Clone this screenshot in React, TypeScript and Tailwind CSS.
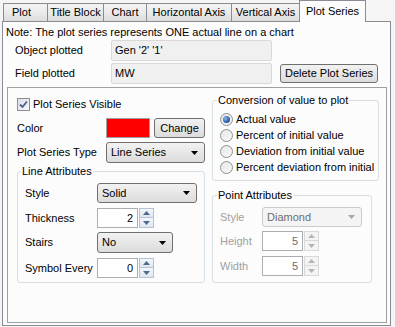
import React from "react";

const tabs = [
  { label: "Plot", w: "w-[45px] justify-start pl-[8px]" },
  { label: "Title Block", w: "w-[57px] justify-center" },
  { label: "Chart", w: "w-[44px] justify-center" },
  { label: "Horizontal Axis", w: "w-[86px] justify-center" },
  { label: "Vertical Axis", w: "w-[69px] justify-center" },
];

const Arrow = ({ up, color }: { up?: boolean; color: string }) => (
  <svg width="7" height="4" viewBox="0 0 7 4">
    {up ? <path d="M0 4 L3.5 0 L7 4 Z" fill={color} /> : <path d="M0 0 L7 0 L3.5 4 Z" fill={color} />}
  </svg>
);

const Combo = ({ text, className, disabled }: { text: string; className: string; disabled?: boolean }) => (
  <div
    className={`${className} flex items-center justify-between rounded-[3px] border pl-[4px] pr-[6px] ${
      disabled
        ? "border-[#c9cbcd] bg-[#f4f4f4] text-[#6d6d6d]"
        : "border-[#707070] bg-gradient-to-b from-[#f2f2f2] to-[#dcdcdc] text-black"
    }`}
  >
    <span>{text}</span>
    <Arrow color={disabled ? "#a8a8a8" : "#000"} />
  </div>
);

const Spin = ({ value, disabled }: { value: string; disabled?: boolean }) => (
  <div className="flex h-[20px]">
    <div
      className={`flex h-full w-[41px] items-center justify-end border bg-white pr-[4px] ${
        disabled ? "border-[#abadb3] text-[#6d6d6d]" : "border-[#abadb3] text-black"
      }`}
    >
      {value}
    </div>
    <div className="ml-px flex w-[15px] flex-col">
      <div
        className={`flex h-[10px] items-center justify-center border ${
          disabled ? "border-[#d9d9d9] bg-[#f4f4f4]" : "border-[#b4c3d6] bg-gradient-to-b from-[#f4f7fb] to-[#dfe6ef]"
        }`}
      >
        <Arrow up color={disabled ? "#b5b5b5" : "#4f6a8f"} />
      </div>
      <div
        className={`flex h-[10px] items-center justify-center border border-t-0 ${
          disabled ? "border-[#d9d9d9] bg-[#f4f4f4]" : "border-[#b4c3d6] bg-gradient-to-b from-[#f4f7fb] to-[#dfe6ef]"
        }`}
      >
        <Arrow color={disabled ? "#b5b5b5" : "#4f6a8f"} />
      </div>
    </div>
  </div>
);

const Radio = ({ label, checked }: { label: string; checked?: boolean }) => (
  <div className="flex h-[16px] items-center">
    <div className="flex h-[13px] w-[13px] items-center justify-center rounded-full border border-[#8e8f8f] bg-gradient-to-br from-[#e6e6e6] to-[#f8f8f8]">
      {checked && <div className="h-[7px] w-[7px] rounded-full bg-[radial-gradient(circle_at_35%_35%,#8fb6ea,#1d4f9c_70%)]" />}
    </div>
    <span className="ml-[3px]">{label}</span>
  </div>
);

export default function App() {
  return (
    <div className="h-[327px] w-[395px] bg-[#f5f5f5] font-['Liberation_Sans',Arial,sans-serif] text-[11px] leading-[13px] text-black">
      {/* tab strip */}
      <div className="flex h-[21px] items-end pl-[3px]">
        {tabs.map((t, i) => (
          <div
            key={t.label}
            className={`${t.w} ${i > 0 ? "-ml-px" : ""} flex h-[18px] items-center border border-b-0 border-[#898c95] bg-gradient-to-b from-[#f3f3f3] via-[#ebebeb] to-[#dcdcdc]`}
          >
            {t.label}
          </div>
        ))}
        <div className="relative z-10 -mb-px -ml-px flex h-[22px] w-[67px] items-start justify-center border border-b-0 border-[#898c95] bg-[#fcfcfc] pt-[4px]">
          Plot Series
        </div>
      </div>

      {/* tab page */}
      <div className="ml-[2px] h-[305px] w-[389px] border border-[#898c95] bg-[#fcfcfc]">
        <div className="ml-[3px] mt-[4px]">Note: The plot series represents ONE actual line on a chart</div>

        <div className="ml-[12px] mt-[1px] flex items-center">
          <div className="w-[96px]">Object plotted</div>
          <div className="flex h-[21px] w-[161px] items-center rounded-[2px] border border-[#d9d9d9] bg-[#f0f0f0] pl-[3px]">
            Gen '2' '1'
          </div>
        </div>

        <div className="ml-[12px] mt-[2px] flex items-center">
          <div className="w-[96px]">Field plotted</div>
          <div className="flex h-[21px] w-[161px] items-center rounded-[2px] border border-[#d9d9d9] bg-[#f0f0f0] pl-[3px]">
            MW
          </div>
          <div className="ml-[8px] flex h-[19px] w-[98px] items-center justify-center rounded-[3px] border border-[#707070] bg-gradient-to-b from-[#f2f2f2] to-[#dcdcdc]">
            Delete Plot Series
          </div>
        </div>

        {/* settings box */}
        <div className="ml-[4px] mt-[3px] flex h-[236px] w-[380px] border border-[#a0a0a0] pl-[9px]">
          {/* left column */}
          <div className="flex w-[188px] flex-col">
            <div className="mt-[10px] flex h-[13px] items-center">
              <div className="flex h-[13px] w-[13px] items-center justify-center border border-[#8e8f8f] bg-gradient-to-br from-[#dcdfe6] to-[#f7f8fa]">
                <svg width="9" height="9" viewBox="0 0 9 9">
                  <path d="M1 4.5 L3.5 7 L8 1.5" stroke="#4c5e8c" strokeWidth="1.8" fill="none" />
                </svg>
              </div>
              <span className="ml-[3px]">Plot Series Visible</span>
            </div>

            <div className="mt-[7px] flex items-center">
              <div className="w-[89px]">Color</div>
              <div className="h-[20px] w-[44px] border border-[#a0a0a0] bg-[#ff0000]" />
              <div className="ml-[4px] flex h-[20px] w-[51px] items-center justify-center rounded-[3px] border border-[#707070] bg-gradient-to-b from-[#f2f2f2] to-[#dcdcdc]">
                Change
              </div>
            </div>

            <div className="mt-[4px] flex items-center">
              <div className="w-[89px]">Plot Series Type</div>
              <Combo text="Line Series" className="h-[21px] w-[99px]" />
            </div>

            <fieldset className="mt-[2px] h-[118px] rounded-[3px] border border-[#d5dfe5] pl-[7px]">
              <legend className="-ml-[4px] px-[1px]">Line Attributes</legend>
              <div className="mt-[5px] flex items-center">
                <div className="w-[72px]">Style</div>
                <Combo text="Solid" className="h-[20px] w-[100px]" />
              </div>
              <div className="mt-[5px] flex items-center">
                <div className="w-[72px]">Thickness</div>
                <Spin value="2" />
              </div>
              <div className="mt-[4px] flex items-center">
                <div className="w-[72px]">Stairs</div>
                <Combo text="No" className="h-[21px] w-[76px]" />
              </div>
              <div className="mt-[5px] flex items-center">
                <div className="w-[72px]">Symbol Every</div>
                <Spin value="0" />
              </div>
            </fieldset>
          </div>

          {/* right column */}
          <div className="ml-[7px] flex flex-col">
            <fieldset className="mt-[6px] h-[87px] w-[167px] rounded-[3px] border border-[#d5dfe5] pl-[7px]">
              <legend className="-ml-[3px] px-[1px]">Conversion of value to plot</legend>
              <div className="mt-[4px] flex flex-col">
                <Radio label="Actual value" checked />
                <Radio label="Percent of initial value" />
                <Radio label="Deviation from initial value" />
                <Radio label="Percent deviation from initial" />
              </div>
            </fieldset>

            <fieldset className="mt-[8px] h-[94px] w-[160px] rounded-[3px] border border-[#d5dfe5] pl-[7px]">
              <legend className="-ml-[3px] px-[1px]">Point Attributes</legend>
              <div className="mt-[5px] flex items-center">
                <div className="w-[42px] text-[#a0a0a0]">Style</div>
                <Combo text="Diamond" className="h-[20px] w-[100px]" disabled />
              </div>
              <div className="mt-[4px] flex items-center">
                <div className="w-[42px] text-[#a0a0a0]">Height</div>
                <Spin value="5" disabled />
              </div>
              <div className="mt-[5px] flex items-center">
                <div className="w-[42px] text-[#a0a0a0]">Width</div>
                <Spin value="5" disabled />
              </div>
            </fieldset>
          </div>
        </div>
      </div>
    </div>
  );
}
